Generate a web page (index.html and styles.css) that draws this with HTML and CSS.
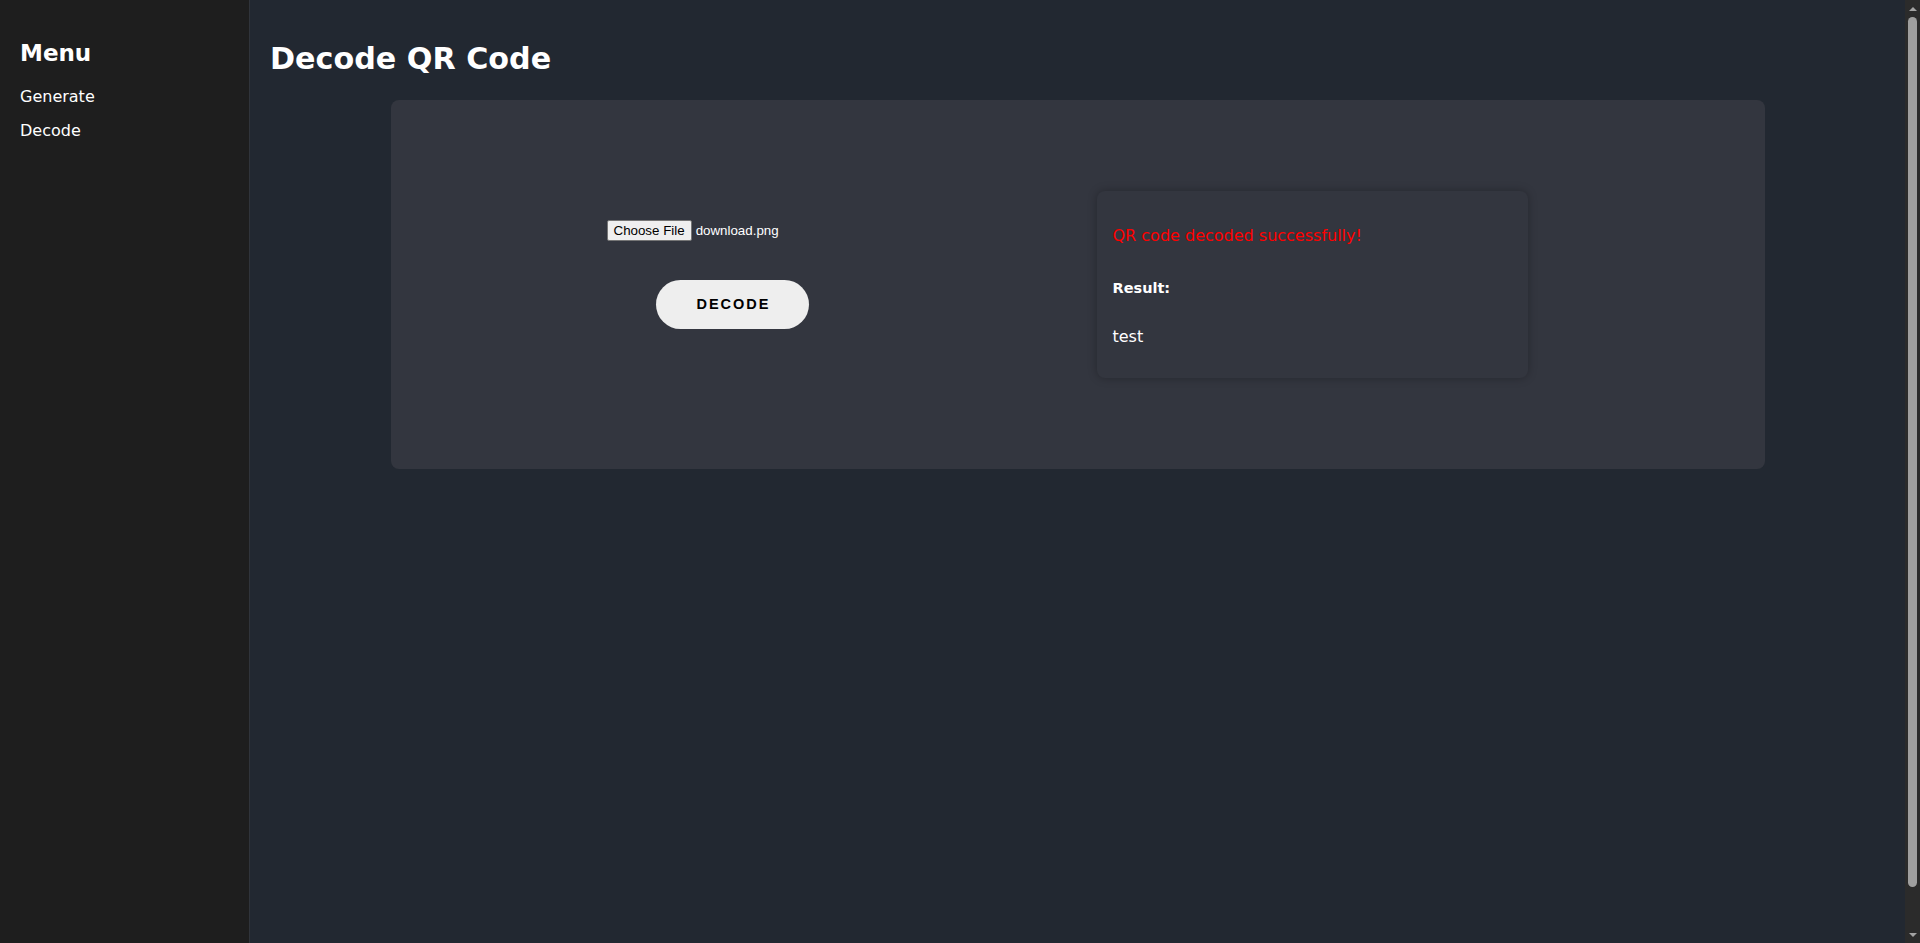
FILE: index.html
```html
<!DOCTYPE html>
<html lang="en">
<head>
<meta charset="utf-8">
<title>Decode QR Code</title>
<link rel="stylesheet" href="styles.css">
</head>
<body>
<div class="layout">
  <nav class="sidebar">
    <h2 class="sidebar-title">Menu</h2>
    <a class="nav-link" href="#">Generate</a>
    <a class="nav-link" href="#">Decode</a>
  </nav>
  <main class="main">
    <h1 class="page-title">Decode QR Code</h1>
    <section class="card">
      <div class="upload-col">
        <div class="file-input">
          <span class="file-btn">Choose File</span>
          <span class="file-name">download.png</span>
        </div>
        <button class="decode-btn" type="button">DECODE</button>
      </div>
      <div class="result-col">
        <div class="result-box">
          <p class="status">QR code decoded successfully!</p>
          <p class="result-label">Result:</p>
          <p class="result-text">test</p>
        </div>
      </div>
    </section>
  </main>
</div>
<div class="scrollbar" aria-hidden="true">
  <span class="scroll-arrow scroll-arrow-up"></span>
  <span class="scroll-thumb"></span>
  <span class="scroll-arrow scroll-arrow-down"></span>
</div>
</body>
</html>
```

FILE: styles.css
```css
html,
body {
  overflow: hidden;
}

body {
  margin: 0;
  padding-right: 15px;
  background: #222831;
  color: #ffffff;
  font-family: "DejaVu Sans", "Noto Sans", sans-serif;
}

.layout {
  display: flex;
  min-height: 100vh;
}

.sidebar {
  flex-shrink: 0;
  width: 209px;
  padding: 20px;
  background: #1e1e1e;
  border-right: 1px solid #30343b;
}

.sidebar-title {
  margin: 19px 0 20px;
  font-size: 23px;
  line-height: 28px;
  font-weight: 700;
}

.nav-link {
  display: block;
  margin-bottom: 13.5px;
  color: #ffffff;
  text-decoration: none;
  font-size: 16px;
  line-height: 20px;
}

.main {
  flex: 1;
  padding: 41px 20px 0;
}

.page-title {
  margin: 0 0 22.7px;
  font-size: 30.2px;
  line-height: 36px;
  font-weight: 700;
}

.card {
  width: 1374px;
  margin: 0 auto;
  box-sizing: border-box;
  padding: 91px 0;
  background: #33363f;
  border-radius: 8px;
  display: grid;
  grid-template-columns: 1fr 1fr;
  align-items: start;
}

.upload-col {
  display: flex;
  flex-direction: column;
  align-items: center;
  padding-top: 29px;
  padding-right: 3px;
}

.file-input {
  width: 252px;
  height: 21px;
  display: flex;
  align-items: center;
  font-family: "Liberation Sans", Arial, sans-serif;
  font-size: 13.33px;
}

.file-btn {
  box-sizing: border-box;
  height: 21px;
  padding: 0 6px;
  line-height: 19px;
  border: 1px solid #767676;
  border-radius: 2px;
  background: #efefef;
  color: #000000;
}

.file-name {
  margin-left: 4px;
  color: #ffffff;
}

.decode-btn {
  margin-top: 39px;
  width: 153px;
  height: 49px;
  padding: 0 0 0 2px;
  border: 0;
  border-radius: 25px;
  background: #eeeeee;
  color: #000000;
  font-family: "Liberation Sans", Arial, sans-serif;
  font-size: 14.5px;
  font-weight: 700;
  letter-spacing: 2px;
}

.result-col {
  padding-left: 19px;
}

.result-box {
  width: 431px;
  box-sizing: border-box;
  padding: 35.5px 16px 30.5px;
  background: #33363f;
  border-radius: 8px;
  box-shadow: 0 0 10px rgba(0, 0, 0, 0.28);
}

.result-box p {
  margin: 0;
  font-size: 16px;
  line-height: 20px;
}

.status {
  color: #ff0000;
}

.result-box .result-label {
  margin-top: 31.5px;
  font-size: 14.5px;
  font-weight: 700;
}

.result-box .result-text {
  margin-top: 29.5px;
}

/* scrollbar drawn over the right edge, as in the screenshot */
.scrollbar {
  position: fixed;
  top: 0;
  right: 0;
  width: 15px;
  height: 100vh;
  background: #2b2b2b;
  display: flex;
  flex-direction: column;
  align-items: center;
}

.scroll-arrow {
  height: 17px;
  width: 15px;
  display: flex;
  justify-content: center;
  align-items: center;
}

.scroll-arrow::before {
  content: "";
  width: 0;
  height: 0;
  border-left: 4px solid transparent;
  border-right: 4px solid transparent;
}

.scroll-arrow-up::before {
  border-bottom: 4px solid #a3a3a3;
}

.scroll-arrow-down::before {
  border-top: 4px solid #a3a3a3;
}

.scroll-thumb {
  width: 9px;
  height: 870px;
  border-radius: 5px;
  background: #9f9f9f;
}

.scroll-arrow-down {
  margin-top: auto;
}
```
